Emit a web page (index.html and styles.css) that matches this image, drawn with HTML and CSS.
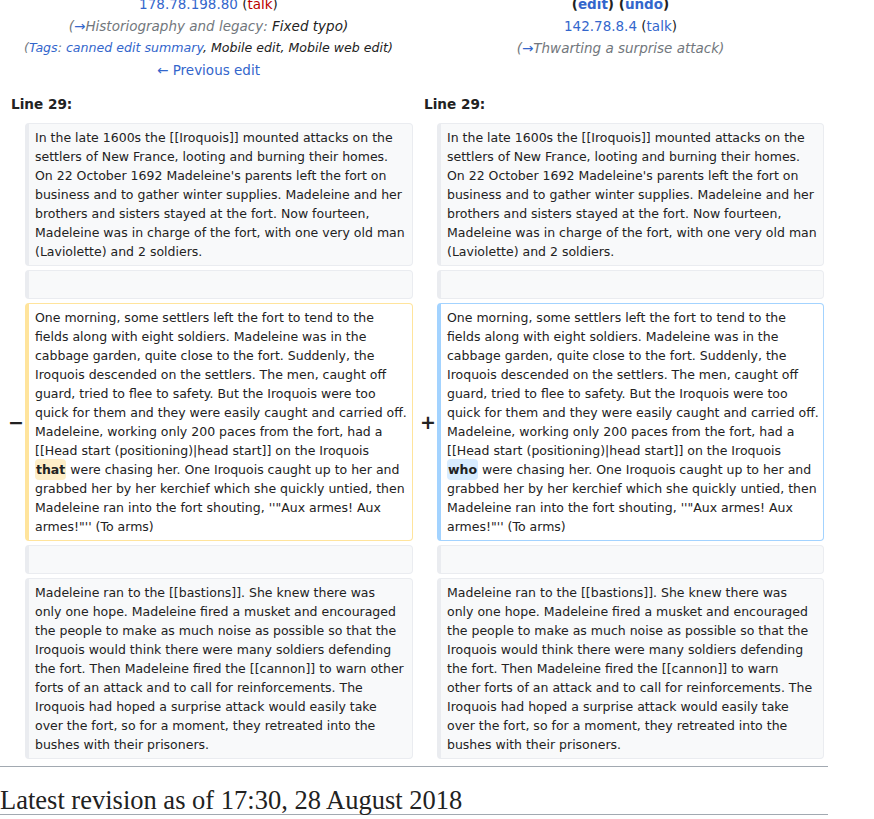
FILE: index.html
```html
<!DOCTYPE html>
<html lang="en">
<head>
<meta charset="utf-8">
<title>Diff</title>
<link rel="stylesheet" href="styles.css">
</head>
<body>
<div class="page">
  <div class="diff">
    <div class="head head-old">
      <div class="hl"><a class="lnk" href="#">178.78.198.80</a> <span class="paren">(<a class="new" href="#">talk</a>)</span></div>
      <div class="hl summary"><span class="gray">(</span><a class="lnk" href="#">→</a><span class="gray">Historiography and legacy:</span> Fixed typo<span>)</span></div>
      <div class="hl tags"><span class="gray">(</span><a class="lnk" href="#">Tags</a><span class="gray">:</span> <a class="lnk" href="#">canned edit summary</a>, Mobile edit, Mobile web edit)</div>
      <div class="hl"><a class="lnk" href="#">← Previous edit</a></div>
    </div>
    <div class="head head-new">
      <div class="hl bold">(<a class="lnk" href="#">edit</a>) (<a class="lnk" href="#">undo</a>)</div>
      <div class="hl"><a class="lnk" href="#">142.78.8.4</a> <span class="paren">(<a class="lnk" href="#">talk</a>)</span></div>
      <div class="hl summary"><span class="gray">(</span><a class="lnk" href="#">→</a><span class="gray">Thwarting a surprise attack)</span></div>
    </div>

    <div class="lineno">Line 29:</div>
    <div class="lineno">Line 29:</div>

    <div class="marker"></div>
    <div class="cell ctx">In the late 1600s the [[Iroquois]] mounted attacks on the<br>settlers of New France, looting and burning their homes.<br>On 22 October 1692 Madeleine's parents left the fort on<br>business and to gather winter supplies. Madeleine and her<br>brothers and sisters stayed at the fort. Now fourteen,<br>Madeleine was in charge of the fort, with one very old man<br>(Laviolette) and 2 soldiers.</div>
    <div class="marker"></div>
    <div class="cell ctx">In the late 1600s the [[Iroquois]] mounted attacks on the<br>settlers of New France, looting and burning their homes.<br>On 22 October 1692 Madeleine's parents left the fort on<br>business and to gather winter supplies. Madeleine and her<br>brothers and sisters stayed at the fort. Now fourteen,<br>Madeleine was in charge of the fort, with one very old man<br>(Laviolette) and 2 soldiers.</div>

    <div class="marker"></div>
    <div class="cell ctx"><br></div>
    <div class="marker"></div>
    <div class="cell ctx"><br></div>

    <div class="marker">−</div>
    <div class="cell del">One morning, some settlers left the fort to tend to the<br>fields along with eight soldiers. Madeleine was in the<br>cabbage garden, quite close to the fort. Suddenly, the<br>Iroquois descended on the settlers. The men, caught off<br>guard, tried to flee to safety. But the Iroquois were too<br>quick for them and they were easily caught and carried off.<br>Madeleine, working only 200 paces from the fort, had a<br>[[Head start (positioning)|head start]] on the Iroquois<br><del class="chg">that</del> were chasing her. One Iroquois caught up to her and<br>grabbed her by her kerchief which she quickly untied, then<br>Madeleine ran into the fort shouting, ''"Aux armes! Aux<br>armes!"'' (To arms)</div>
    <div class="marker">+</div>
    <div class="cell add">One morning, some settlers left the fort to tend to the<br>fields along with eight soldiers. Madeleine was in the<br>cabbage garden, quite close to the fort. Suddenly, the<br>Iroquois descended on the settlers. The men, caught off<br>guard, tried to flee to safety. But the Iroquois were too<br>quick for them and they were easily caught and carried off.<br>Madeleine, working only 200 paces from the fort, had a<br>[[Head start (positioning)|head start]] on the Iroquois<br><ins class="chg">who</ins> were chasing her. One Iroquois caught up to her and<br>grabbed her by her kerchief which she quickly untied, then<br>Madeleine ran into the fort shouting, ''"Aux armes! Aux<br>armes!"'' (To arms)</div>

    <div class="marker"></div>
    <div class="cell ctx"><br></div>
    <div class="marker"></div>
    <div class="cell ctx"><br></div>

    <div class="marker"></div>
    <div class="cell ctx">Madeleine ran to the [[bastions]]. She knew there was<br>only one hope. Madeleine fired a musket and encouraged<br>the people to make as much noise as possible so that the<br>Iroquois would think there were many soldiers defending<br>the fort. Then Madeleine fired the [[cannon]] to warn other<br>forts of an attack and to call for reinforcements. The<br>Iroquois had hoped a surprise attack would easily take<br>over the fort, so for a moment, they retreated into the<br>bushes with their prisoners.</div>
    <div class="marker"></div>
    <div class="cell ctx">Madeleine ran to the [[bastions]]. She knew there was<br>only one hope. Madeleine fired a musket and encouraged<br>the people to make as much noise as possible so that the<br>Iroquois would think there were many soldiers defending<br>the fort. Then Madeleine fired the [[cannon]] to warn<br>other forts of an attack and to call for reinforcements. The<br>Iroquois had hoped a surprise attack would easily take<br>over the fort, so for a moment, they retreated into the<br>bushes with their prisoners.</div>
  </div>
  <hr class="diff-hr">
  <h2 class="current">Latest revision as of 17:30, 28 August 2018</h2>
</div>
</body>
</html>
```

FILE: styles.css
```css
html, body {
  margin: 0;
  padding: 0;
  background: #ffffff;
}
body {
  font-family: "DejaVu Sans", sans-serif;
  color: #222222;
}
.page {
  width: 828px;
}
.diff {
  display: grid;
  grid-template-columns: 17px 388px 16px 387px;
  column-gap: 4px;
  row-gap: 4px;
  padding-left: 4px;
  margin-top: -7px;
}
.head {
  grid-column: span 2;
  text-align: center;
  font-size: 13.5px;
  line-height: 22px;
}
.hl {
  white-space: nowrap;
}
.bold {
  font-weight: bold;
}
a {
  text-decoration: none;
}
.lnk {
  color: #3366cc;
}
.new {
  color: #ba0000;
}
.paren {
  color: #222222;
}
.summary {
  font-style: italic;
}
.gray {
  color: #72777d;
}
.tags {
  font-size: 12.6px;
  font-style: italic;
  color: #222222;
}
.lineno {
  grid-column: span 2;
  font-weight: bold;
  font-size: 13.6px;
  line-height: 19px;
  padding: 10px 7px 5px;
}
.marker {
  font-weight: bold;
  font-size: 19px;
  text-align: right;
  align-self: center;
  margin-right: -3px;
}
.cell {
  font-size: 12.5px;
  line-height: 19px;
  padding: 4px 2px 4px 6px;
  border: 1px solid #eaecf0;
  border-left-width: 4px;
  border-radius: 4px;
  white-space: nowrap;
}
.ctx {
  background: #f8f9fa;
  border-color: #eaecf0;
}
.del {
  background: #ffffff;
  border-color: #ffe49c;
}
.add {
  background: #ffffff;
  border-color: #a3d3ff;
}
.chg {
  font-weight: bold;
  text-decoration: none;
  border-radius: 4px;
  padding: 3px 1px;
}
del.chg {
  background: #feeec8;
}
ins.chg {
  background: #d8ecff;
}
.diff-hr {
  margin: 7px 0 0;
  border: 0;
  border-top: 1px solid #a2a9b1;
  height: 0;
}
.current {
  font-family: "Liberation Serif", serif;
  font-weight: normal;
  font-size: 26.5px;
  line-height: 28px;
  margin: 19px 0 0;
  padding: 0;
  border-bottom: 1px solid #a2a9b1;
}
```
